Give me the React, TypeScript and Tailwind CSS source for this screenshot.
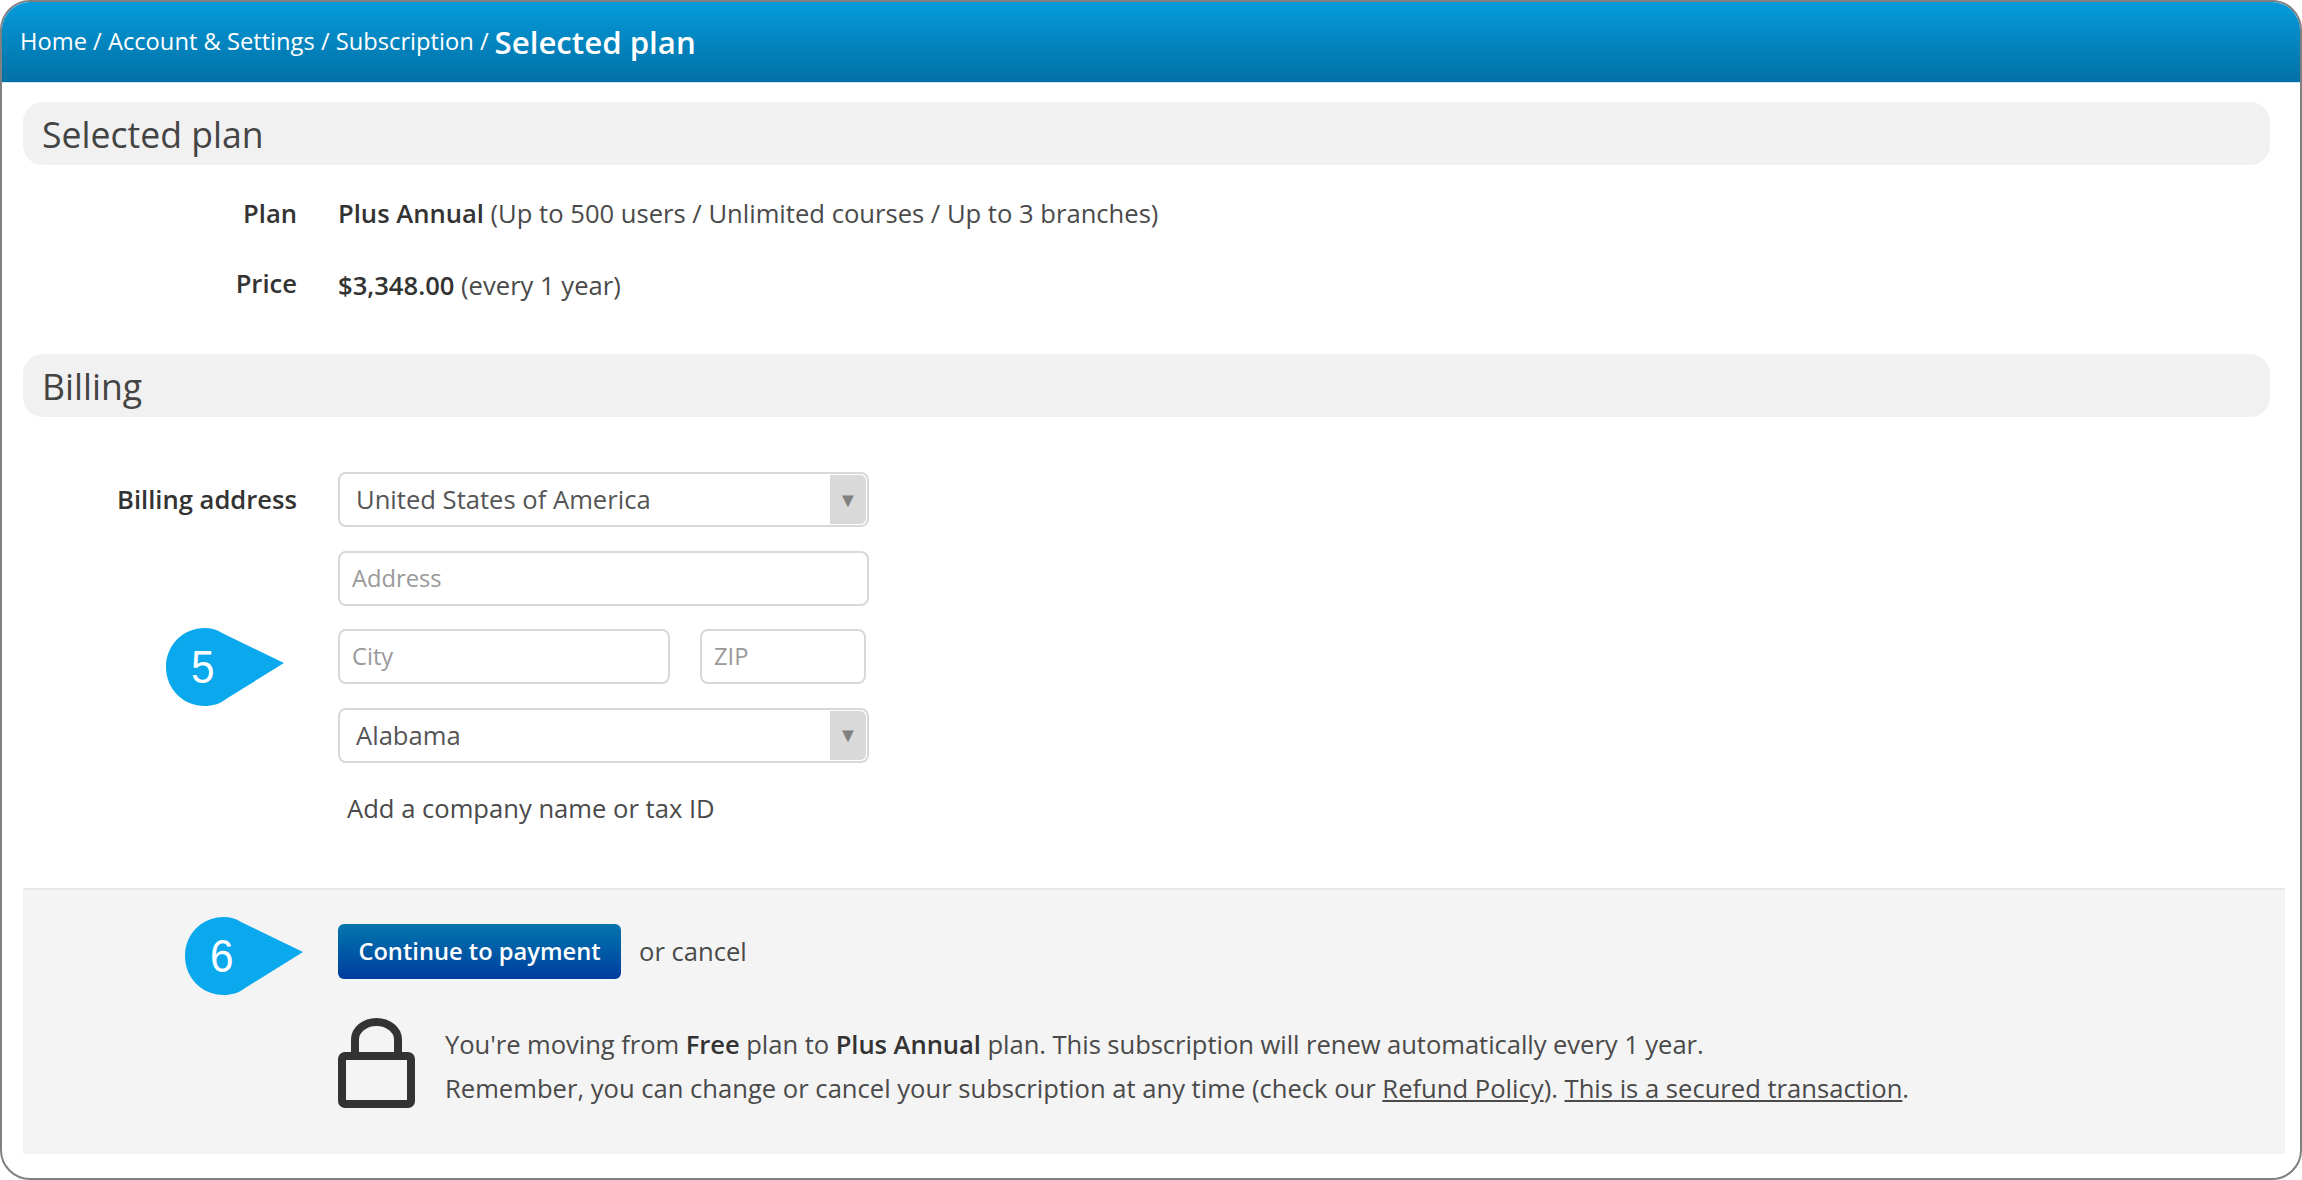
function Badge({ n, className }: { n: string; className: string }) {
  return (
    <div className={`absolute w-[118px] h-[78px] ${className}`}>
      <svg viewBox="0 0 118 78" className="w-full h-full">
        <path d="M39 0C45 0 51 1.5 56 5L118 35L60 71C54 76 46 78 39 78C17 78 0 61 0 39C0 17 17 0 39 0Z" fill="#0aa9ee" />
      </svg>
      <span className="absolute left-[25px] top-[11px] origin-left scale-x-90 text-[47px] leading-[56px] text-white font-['Liberation_Sans',sans-serif]">
        {n}
      </span>
    </div>
  );
}

function SectionTitle({ children }: { children: string }) {
  return (
    <h2 className="h-[63px] w-[2247px] ml-[21px] pl-[19px] rounded-[20px] bg-[#f1f1f1] text-[35.6px] leading-[65px] text-[#444]">
      {children}
    </h2>
  );
}

function SelectBox({ value }: { value: string }) {
  return (
    <div className="h-[55px] w-[531px] flex items-stretch rounded-[8px] border-2 border-[#d8d8d8] bg-white">
      <span className="flex-1 pl-[16px] leading-[51px] text-[#555]">{value}</span>
      <span className="w-[36px] my-[1px] mr-[1px] flex items-center justify-center rounded-r-[6px] bg-[#d9d9d9] text-[#808080] text-[20px]">
        ▼
      </span>
    </div>
  );
}

function TextBox({ hint, width }: { hint: string; width: string }) {
  return (
    <div className={`h-[55px] ${width} pl-[12px] rounded-[8px] border-2 border-[#d8d8d8] bg-white text-[23.7px] leading-[51px] text-[#999]`}>
      {hint}
    </div>
  );
}

export default function App() {
  return (
    <div className="relative h-[1180px] w-[2302px] overflow-hidden rounded-[30px] border-2 border-[#808080] bg-white font-['Open_Sans',sans-serif] text-[25.6px] text-[#4a4a4a]">
      <header className="h-[81px] pl-[18px] flex items-center gap-[6px] border-b border-[#cfe8f4] bg-gradient-to-b from-[#059bdb] to-[#0270a5] text-white">
        <span className="text-[23.7px]">Home / Account &amp; Settings / Subscription /</span>
        <span className="text-[31.2px] font-semibold">Selected plan</span>
      </header>

      <main className="pt-[19px]">
        <SectionTitle>Selected plan</SectionTitle>

        <div className="mt-[27px] ml-[21px] flex gap-[41px] h-[44px] items-center">
          <span className="w-[274px] text-right font-semibold text-[#333]">Plan</span>
          <span>
            <b className="font-semibold text-[#333]">Plus Annual</b> (Up to 500 users / Unlimited courses / Up to 3 branches)
          </span>
        </div>
        <div className="mt-[26px] ml-[21px] flex gap-[41px] h-[44px] items-center">
          <span className="w-[274px] text-right font-semibold text-[#333]">Price</span>
          <span className="mt-[4px]">
            <b className="font-semibold text-[#333]">$3,348.00</b> (every 1 year)
          </span>
        </div>

        <div className="mt-[48px]">
          <SectionTitle>Billing</SectionTitle>
        </div>

        <div className="relative mt-[55px] ml-[21px] flex gap-[41px]">
          <span className="w-[274px] text-right font-semibold text-[#333] leading-[55px]">Billing address</span>
          <div className="flex flex-col gap-[23.6px]">
            <SelectBox value="United States of America" />
            <TextBox hint="Address" width="w-[531px]" />
            <div className="flex gap-[30px]">
              <TextBox hint="City" width="w-[332px]" />
              <TextBox hint="ZIP" width="w-[166px]" />
            </div>
            <SelectBox value="Alabama" />
            <span className="mt-[7px] pl-[9px] leading-[32px]">Add a company name or tax ID</span>
          </div>
          <Badge n="5" className="left-[143px] top-[156px]" />
        </div>

        <section className="relative mt-[63px] ml-[21px] w-[2262px] h-[266px] border-t-2 border-[#e9e9e9] bg-[#f4f4f4] pl-[315px] pt-[34px]">
          <Badge n="6" className="left-[162px] top-[27px]" />
          <div className="flex items-center gap-[18px]">
            <button className="h-[55px] w-[283px] rounded-[6px] bg-gradient-to-b from-[#0976ad] to-[#003c9e] font-semibold text-[23.7px] text-white">
              Continue to payment
            </button>
            <span>or cancel</span>
          </div>
          <div className="mt-[39px] flex items-start gap-[30px]">
            <svg viewBox="0 0 77 90" className="w-[77px] h-[90px] shrink-0">
              <path d="M17 38V21.5A21.5 17.5 0 0 1 60 21.5V38" fill="none" stroke="#333" strokeWidth="8" />
              <rect x="4" y="38" width="69" height="48" rx="3" fill="none" stroke="#333" strokeWidth="8" />
            </svg>
            <div className="mt-[5px] leading-[44px]">
              <p className="tracking-[-0.06px]">
                You're moving from <b className="font-semibold text-[#333]">Free</b> plan to{' '}
                <b className="font-semibold text-[#333]">Plus Annual</b> plan. This subscription will renew automatically every 1 year.
              </p>
              <p>
                Remember, you can change or cancel your subscription at any time (check our <u>Refund Policy</u>). <u>This is a secured transaction</u>.
              </p>
            </div>
          </div>
        </section>
      </main>
    </div>
  );
}
